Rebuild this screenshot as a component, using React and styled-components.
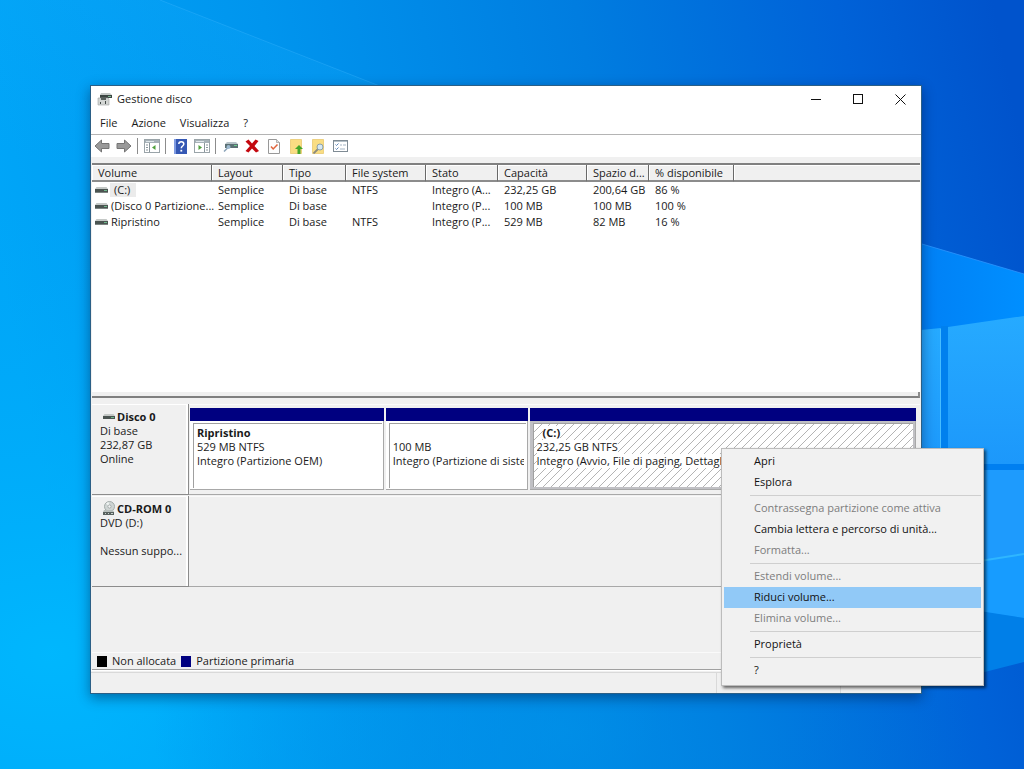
import React, { useState } from 'react';
import styled, { createGlobalStyle } from 'styled-components';

const GlobalStyle = createGlobalStyle`
  * {
    box-sizing: border-box;
  }

  body {
    margin: 0;
    background: #0086e0;
    color: #1a1a1a;
    font-family: 'Open Sans', 'Segoe UI', sans-serif;
    font-size: 11px;
    line-height: 14px;
  }

  button {
    font: inherit;
    color: inherit;
    background: none;
    border: none;
    padding: 0;
  }
`;

// Desktop
const Desktop = styled.div`
  position: relative;
  min-height: 100vh;
  overflow: hidden;
`;

const WallpaperSvg = styled.svg`
  position: absolute;
  inset: 0;
  width: 100%;
  height: 100%;
`;

// Window
const Window = styled.main`
  position: absolute;
  top: 85px;
  left: 90px;
  right: 102px;
  background: #f0f0f0;
  border: 1px solid #2b5f86;
  box-shadow: 0 4px 12px rgba(0, 20, 60, 0.45);
`;

const TitleBar = styled.header`
  display: flex;
  align-items: center;
  height: 26px;
  padding-left: 6px;
  background: #fff;
`;

const Title = styled.h1`
  flex: 1;
  margin: 0 0 0 5px;
  font-size: 11px;
  font-weight: 400;
`;

const CaptionButton = styled.button`
  display: flex;
  align-items: center;
  justify-content: center;
  width: 42px;
  height: 26px;

  &:hover {
    background: #e5e5e5;
  }
`;

const MenuBar = styled.nav`
  display: flex;
  height: 22px;
  padding-left: 2px;
  background: #fff;
`;

const MenuBarButton = styled.button`
  padding: 0 7px;

  &:hover {
    background: #e5f3ff;
  }
`;

const Toolbar = styled.div`
  display: flex;
  align-items: center;
  height: 23px;
  background: #fff;
  border-top: 1px solid #b4b4b4;
`;

const ToolButton = styled.button`
  display: flex;
  align-items: center;
  justify-content: center;
  width: 22px;
  height: 20px;
`;

const ToolSeparator = styled.span`
  width: 1px;
  height: 16px;
  margin: 0 3px 0 2px;
  background: #8c8c8c;
`;

// Volume list
const ListPane = styled.section`
  min-height: 229px;
  margin: 6px 1px 0;
  background: #fff;
  border-top: 2px solid #808080;
`;

const VolumeTable = styled.table`
  width: 100%;
  table-layout: fixed;
  border-collapse: separate;
  border-spacing: 0;
`;

const Col = styled.col`
  width: ${({ $width }) => ($width ? `${$width}px` : 'auto')};
`;

const HeadCell = styled.th`
  height: 17px;
  padding: 0 0 0 6px;
  overflow: hidden;
  text-align: left;
  text-overflow: ellipsis;
  white-space: nowrap;
  font-weight: 400;
  background: #f0f0f0;
  border-bottom: 2px solid #8c8c8c;
  border-right: ${({ $last }) => ($last ? 'none' : '1px solid #696969')};
  box-shadow: inset 1px 1px 0 #fff;
`;

const Cell = styled.td`
  height: 16px;
  padding: 0 0 0 6px;
  overflow: hidden;
  text-overflow: ellipsis;
  white-space: nowrap;
`;

const NameCell = styled(Cell)`
  padding-left: 3px;
  overflow: visible;

  svg {
    display: inline-block;
    margin: 4px 0;
    vertical-align: top;
  }
`;

const VolumeName = styled.span`
  display: inline-block;
  padding: 0 ${({ $selected }) => ($selected ? '6px 0 4px' : '0 0 1px')};
  margin-left: 2px;
  vertical-align: top;
  background: ${({ $selected }) => ($selected ? '#ebebeb' : 'none')};
`;

const Splitter = styled.div`
  height: 6px;
  margin: 0 1px;
  border-right: 2px solid #8c8c8c;
  border-bottom: 2px solid #808080;
`;

// Disk map
const DiskPane = styled.section`
  display: flex;
  flex-direction: column;
  gap: 1px;
  min-height: 254px;
  margin-left: 1px;
  padding-top: 6px;
`;

const DiskRow = styled.div`
  display: flex;
  height: 91px;
`;

const DiskLabel = styled.div`
  width: 97px;
  padding: 6px 4px 0 8px;
  border-right: 1px solid #8c8c8c;
  border-bottom: 1px solid #8c8c8c;
  box-shadow: inset -2px 1px 0 #fff;
`;

const DiskName = styled.h2`
  display: flex;
  align-items: flex-end;
  gap: 1px;
  height: 14px;
  margin: 0;
  font-size: 11px;
  line-height: 14px;
  font-weight: 700;
  white-space: nowrap;
`;

const DiskLine = styled.div`
  height: 14px;
  overflow: hidden;
  text-overflow: ellipsis;
  white-space: nowrap;
`;

const Lane = styled.div`
  display: flex;
  flex: 1;
  gap: 2px;
  min-width: 0;
  margin-right: 1px;
  padding: 4px 4px 4px 1px;
  border-bottom: 1px solid #a8a8a8;
  box-shadow: inset 0 1px 0 #fafafa;
`;

const Partition = styled.div`
  display: flex;
  flex-direction: column;
  flex: ${({ $share }) => $share} 1 0;
  min-width: 0;
  border-top: 13px solid #000080;
`;

const PartitionFrame = styled.div`
  display: flex;
  flex: 1;
  padding: ${({ $selected }) => ($selected ? '2px 2px 2px 3px' : '2px 1px 1px 3px')};
  background: ${({ $selected }) => ($selected ? '#c0c0c4' : '#fff')};
  border: solid #a8a8a8;
  border-width: 0 1px 1px 0;
`;

const PartitionBody = styled.div`
  flex: 1;
  min-width: 0;
  padding: 2px 2px 0 3px;
  overflow: hidden;
  border: solid #a0a0a0;
  border-width: 1px 0 0 1px;
  background: ${({ $selected }) =>
    $selected
      ? 'linear-gradient(135deg, #fff 46%, #b4b4b4 46% 54%, #fff 54%) 0 0 / 8px 8px'
      : '#fff'};
`;

const PartitionLine = styled.div`
  height: 14px;
  overflow: hidden;
  white-space: nowrap;
  font-weight: ${({ $bold }) => ($bold ? 700 : 400)};
  padding-left: ${({ $indent }) => ($indent ? '6px' : '0')};

  span {
    display: inline-block;
    background: #fff;
  }
`;

const Legend = styled.div`
  display: flex;
  align-items: center;
  gap: 5px;
  height: 18px;
  margin: 0 1px;
  padding-left: 5px;
  border-top: 1px solid #fafafa;
  border-bottom: 1px solid #a0a0a0;
`;

const Swatch = styled.span`
  width: 10px;
  height: 11px;
  background: ${({ $color }) => $color};
`;

const StatusBar = styled.footer`
  display: flex;
  height: 23px;
  border-top: 1px solid #fff;
`;

const StatusCell = styled.div`
  flex: ${({ $width }) => ($width ? `0 0 ${$width}px` : '1')};
  margin-top: 1px;
  border-top: 1px solid #d9d9d9;
  border-right: 1px solid #d9d9d9;

  &:last-child {
    border-right: none;
  }
`;

// Context menu
const ContextMenu = styled.div`
  position: absolute;
  top: 448px;
  right: 40px;
  width: 263px;
  padding: 2px 2px 4px 2px;
  background: #f1f1f1;
  border: 1px solid #bcbcbc;
  box-shadow: 2px 2px 3px rgba(0, 0, 0, 0.6);
`;

const ContextItem = styled.button`
  display: block;
  width: 100%;
  height: 21px;
  padding: 0 0 1px 30px;
  text-align: left;
  white-space: nowrap;
  color: ${({ disabled }) => (disabled ? '#7d7d7d' : '#111')};
  background: ${({ $active }) => ($active ? '#91c9f7' : 'none')};
`;

const ContextSeparator = styled.hr`
  height: 1px;
  margin: 2px 0 2px 26px;
  border: none;
  background: #cfcfcf;
`;

const columns = [
  { label: 'Volume', width: 120 },
  { label: 'Layout', width: 71 },
  { label: 'Tipo', width: 63 },
  { label: 'File system', width: 80 },
  { label: 'Stato', width: 72 },
  { label: 'Capacità', width: 89 },
  { label: 'Spazio d...', width: 62 },
  { label: '% disponibile', width: 85 },
];

const volumes = [
  { name: '(C:)', cells: ['Semplice', 'Di base', 'NTFS', 'Integro (A...', '232,25 GB', '200,64 GB', '86 %'] },
  { name: '(Disco 0 Partizione...', cells: ['Semplice', 'Di base', '', 'Integro (P...', '100 MB', '100 MB', '100 %'] },
  { name: 'Ripristino', cells: ['Semplice', 'Di base', 'NTFS', 'Integro (P...', '529 MB', '82 MB', '16 %'] },
];

const partitions = [
  { id: 'oem', share: 194, name: 'Ripristino', size: '529 MB NTFS', status: 'Integro (Partizione OEM)' },
  { id: 'efi', share: 142, name: '', size: '100 MB', status: 'Integro (Partizione di sistem' },
  {
    id: 'c',
    share: 387,
    name: '(C:)',
    size: '232,25 GB NTFS',
    status: 'Integro (Avvio, File di paging, Dettagli',
    selected: true,
  },
];

const menuItems = [
  { label: 'Apri' },
  { label: 'Esplora' },
  null,
  { label: 'Contrassegna partizione come attiva', disabled: true },
  { label: 'Cambia lettera e percorso di unità...' },
  { label: 'Formatta...', disabled: true },
  null,
  { label: 'Estendi volume...', disabled: true },
  { label: 'Riduci volume...' },
  { label: 'Elimina volume...', disabled: true },
  null,
  { label: 'Proprietà' },
  null,
  { label: '?' },
];

const Wallpaper = () => (
  <WallpaperSvg viewBox="0 0 1024 769" preserveAspectRatio="none" aria-hidden="true">
    <defs>
      <linearGradient id="sky" x1="0" y1="0.35" x2="1" y2="0.2">
        <stop offset="0" stopColor="#00a6f8" />
        <stop offset="0.3" stopColor="#0095ee" />
        <stop offset="0.6" stopColor="#007de0" />
        <stop offset="0.85" stopColor="#0062d8" />
        <stop offset="1" stopColor="#0053cc" />
      </linearGradient>
      <radialGradient id="corner" cx="0.05" cy="0.85" r="0.6">
        <stop offset="0" stopColor="#00bbff" stopOpacity="0.8" />
        <stop offset="1" stopColor="#00a8f8" stopOpacity="0" />
      </radialGradient>
      <radialGradient id="floor" cx="0.55" cy="0.95" r="0.4">
        <stop offset="0" stopColor="#008fe6" stopOpacity="0.7" />
        <stop offset="1" stopColor="#0078dc" stopOpacity="0" />
      </radialGradient>
      <linearGradient id="haze" x1="0" y1="1" x2="0.5" y2="0">
        <stop offset="0.3" stopColor="#18b0ff" stopOpacity="0" />
        <stop offset="1" stopColor="#18b0ff" stopOpacity="0.2" />
      </linearGradient>
      <linearGradient id="beam" x1="0" y1="0" x2="1" y2="0">
        <stop offset="0" stopColor="#0078f0" />
        <stop offset="1" stopColor="#008fff" />
      </linearGradient>
      <linearGradient id="pane" x1="0" y1="0" x2="0" y2="1">
        <stop offset="0" stopColor="#26aaff" />
        <stop offset="1" stopColor="#1c98fb" />
      </linearGradient>
    </defs>
    <rect width="1024" height="769" fill="url(#sky)" />
    <rect width="1024" height="769" fill="url(#corner)" />
    <rect width="1024" height="769" fill="url(#floor)" />
    <polygon points="160,0 390,90 390,240 0,240 0,0" fill="url(#haze)" />
    <path d="M160 0 390 90" stroke="#3cb6ff" opacity="0.35" />
    <polygon points="860,225 922,244 1024,274 1024,620 860,620" fill="url(#beam)" />
    <path d="M922 244 1024 274" stroke="#2d96ff" opacity="0.8" />
    <polygon points="860,336 941,328 941,464 860,464" fill="url(#pane)" />
    <polygon points="948,327 1024,316 1024,464 948,464" fill="url(#pane)" />
    <polygon points="860,470 1024,470 1024,618 860,590" fill="#1e9bfd" />
    <rect x="941" y="326" width="7" height="140" fill="#0080ee" />
    <rect x="941" y="464" width="83" height="6" fill="#007ff0" />
    <path d="M940.500 329V464" stroke="#45bcff" />
    <polygon points="980,561 1024,554 1024,618 980,612" fill="#179cff" />
    <path d="M980 561 1024 554" stroke="#2fb6ff" strokeWidth="2" />
    <polygon points="922,602 1024,618 1024,662 922,688" fill="#007fe8" />
  </WallpaperSvg>
);

const DriveIcon = () => (
  <svg width="13" height="6" viewBox="0 0 13 6" aria-hidden="true">
    <path d="M1.500 0h10l1.500 2H0z" fill="#c4c8c6" />
    <rect y="2" width="13" height="4" fill="#4b5451" />
    <rect y="5" width="13" height="1" fill="#7d8582" />
    <rect x="9" y="3" width="3" height="1" fill="#6fb88c" />
  </svg>
);

const DiskIcon = () => (
  <svg width="16" height="14" viewBox="-3 -4 16 14" aria-hidden="true">
    <path d="M1.500 0h9l1.500 2H0z" fill="#c4c8c6" />
    <rect y="2" width="12" height="3" fill="#4b5451" />
    <rect x="8" y="3" width="3" height="1" fill="#6fb88c" />
  </svg>
);

const CdIcon = () => (
  <svg width="16" height="15" viewBox="-1 0 16 15" aria-hidden="true">
    <circle cx="8.500" cy="5.500" r="5" fill="#cfd5d4" stroke="#a3acaa" />
    <path d="M8.500 5.500 5 2.500 7.500 1z" fill="#f2f6f5" />
    <circle cx="8.500" cy="5.500" r="1.600" fill="#f4f4f4" stroke="#98a19f" strokeWidth="0.8" />
    <path d="M3 9h9l1 2H2z" fill="#b8bfbc" />
    <rect x="2" y="11" width="11" height="3" fill="#58615e" />
    <path d="M4 12.500h1M7 12.500h1M10 12.500h2" stroke="#c8d0cc" />
  </svg>
);

const AppIcon = () => (
  <svg width="15" height="14" viewBox="0 0 15 14" aria-hidden="true">
    <path d="M4 1h9l2 2H3z" fill="#c5c9c7" />
    <rect x="3" y="3" width="12" height="3" fill="#3c4542" />
    <rect x="11" y="4" width="3" height="1" fill="#7fb894" />
    <path d="M1 6h10l1 1v6H1z" fill="#d3d6d4" stroke="#9ea3a1" strokeWidth="0.6" />
    <path d="M4 6h5v2H4z" fill="#58605d" />
    <path d="M3 10h1v2H3zM8 9h1v3H8z" fill="#424947" />
  </svg>
);

const ArrowIcon = ({ forward }) => (
  <svg width="16" height="14" viewBox="0 0 16 14" aria-hidden="true">
    <path
      d={forward ? 'M15 7 8.500 1v3.500H1v5h7.500V13z' : 'M1 7l6.500-6v3.500H15v5H7.500V13z'}
      fill="#9a9a9a"
      stroke="#757575"
    />
  </svg>
);

const PanelIcon = ({ flip }) => (
  <svg width="16" height="14" viewBox="0 0 16 14" aria-hidden="true">
    <rect x="0.500" y="0.500" width="15" height="13" fill="#fff" stroke="#9aa4a9" />
    <rect x="1" y="1" width="14" height="3" fill="#a7b2b8" />
    <path d="M2 2.500h8" stroke="#dfe6ea" />
    {flip ? (
      <>
        <path d="M10.500 4v9M12 6h2M12 8.500h2M12 11h2" stroke="#89959b" />
        <path d="M4.500 6 8 8.500 4.500 11z" fill="#4fa03c" />
      </>
    ) : (
      <>
        <path d="M5.500 4v9M2 6h2M2 8.500h2M2 11h2" stroke="#89959b" />
        <path d="M11.500 6 8 8.500l3.500 2.500z" fill="#4fa03c" />
      </>
    )}
  </svg>
);

const HelpIcon = () => (
  <svg width="13" height="15" viewBox="0 0 13 15" aria-hidden="true">
    <rect width="13" height="15" fill="#3558b4" />
    <rect width="2" height="15" fill="#7f9be0" />
    <path d="M4.800 5c0-3 5-3 5 0 0 2-2.500 2-2.500 4.200" fill="none" stroke="#fff" strokeWidth="1.500" />
    <rect x="6.400" y="10.800" width="1.800" height="1.800" fill="#fff" />
  </svg>
);

const ConnectIcon = () => (
  <svg width="15" height="12" viewBox="0 0 15 12" aria-hidden="true">
    <path d="M4 2h9l2 2H2z" fill="#b7c3c8" />
    <rect x="2" y="4" width="13" height="4" fill="#5b7074" />
    <rect x="11" y="5" width="3" height="1" fill="#6bd08c" />
    <path d="M1 11.500l4-4" stroke="#8aa3b8" strokeWidth="1.500" />
    <circle cx="5.500" cy="7" r="2" fill="#9dbad0" />
  </svg>
);

const DeleteIcon = () => (
  <svg width="14" height="14" viewBox="0 0 14 14" aria-hidden="true">
    <path d="M0.500 2.500 3.500.5 7 4.500 10.500.5 13.500 2 9.500 7l4.500 5-3 1.500L7 9.500 3.500 13.500.5 12 5 7z" fill="#c4080f" />
  </svg>
);

const CheckPageIcon = () => (
  <svg width="12" height="15" viewBox="0 0 12 15" aria-hidden="true">
    <path d="M.5.5h8l3 3v11H.5z" fill="#fdfdfd" stroke="#989898" />
    <path d="M8.500.5v3h3" fill="#ddd" stroke="#989898" strokeWidth="0.700" />
    <path d="M3 7.500 5.200 10 9.500 5.500" fill="none" stroke="#e0643c" strokeWidth="1.500" />
  </svg>
);

const FolderUpIcon = () => (
  <svg width="13" height="15" viewBox="0 0 13 15" aria-hidden="true">
    <path d="M.5.5h11v14H.5z" fill="#f9dd83" stroke="#e3bd55" strokeWidth="0.600" />
    <path d="M9 6l4 4h-2.500v5h-3v-5H5z" fill="#43a62a" />
  </svg>
);

const FolderSearchIcon = () => (
  <svg width="14" height="15" viewBox="0 0 14 15" aria-hidden="true">
    <path d="M1.500.5h11v14h-11z" fill="#f9dd83" stroke="#e3bd55" strokeWidth="0.600" />
    <path d="M7 10 2.500 14.500" stroke="#8b8b7c" strokeWidth="1.800" />
    <circle cx="9" cy="8" r="3" fill="#d5e8f2" stroke="#8ba0aa" />
  </svg>
);

const ListIcon = () => (
  <svg width="15" height="12" viewBox="0 0 15 12" aria-hidden="true">
    <rect x="0.500" y="0.500" width="14" height="11" fill="#fff" stroke="#7f8b94" />
    <path d="M1 1.500h13" stroke="#b4c0c8" />
    <path d="M2.500 4.500l1 1 2-2M2.500 8.500l1 1 2-2" fill="none" stroke="#5b84b8" />
    <path d="M7 5h2M10 5h3M7 9h5" stroke="#a4b4c4" />
  </svg>
);

const toolGroups = [
  [
    { label: 'Indietro', icon: <ArrowIcon /> },
    { label: 'Avanti', icon: <ArrowIcon forward /> },
  ],
  [{ label: 'Mostra albero', icon: <PanelIcon /> }],
  [
    { label: 'Guida', icon: <HelpIcon /> },
    { label: 'Mostra azioni', icon: <PanelIcon flip /> },
  ],
  [
    { label: 'Connetti', icon: <ConnectIcon /> },
    { label: 'Elimina', icon: <DeleteIcon /> },
    { label: 'Verifica', icon: <CheckPageIcon /> },
    { label: 'Livello superiore', icon: <FolderUpIcon /> },
    { label: 'Cerca', icon: <FolderSearchIcon /> },
    { label: 'Impostazioni', icon: <ListIcon /> },
  ],
];

const App = () => {
  const [activeItem, setActiveItem] = useState('Riduci volume...');

  return (
    <Desktop>
      <GlobalStyle />
      <Wallpaper />

      <Window>
        <TitleBar>
          <AppIcon />
          <Title>Gestione disco</Title>
          <CaptionButton aria-label="Riduci a icona">
            <svg width="11" height="11" viewBox="0 0 11 11">
              <path d="M0 5.500h10" stroke="#111" />
            </svg>
          </CaptionButton>
          <CaptionButton aria-label="Ingrandisci">
            <svg width="11" height="11" viewBox="0 0 11 11">
              <rect x="0.500" y="0.500" width="9" height="9" fill="none" stroke="#111" />
            </svg>
          </CaptionButton>
          <CaptionButton aria-label="Chiudi">
            <svg width="11" height="11" viewBox="0 0 11 11">
              <path d="M.5.5l10 10M10.500.5l-10 10" stroke="#111" />
            </svg>
          </CaptionButton>
        </TitleBar>

        <MenuBar>
          {['File', 'Azione', 'Visualizza', '?'].map((label) => (
            <MenuBarButton key={label}>{label}</MenuBarButton>
          ))}
        </MenuBar>

        <Toolbar>
          {toolGroups.map((group, index) => (
            <React.Fragment key={group[0].label}>
              {index > 0 && <ToolSeparator />}
              {group.map(({ label, icon }) => (
                <ToolButton key={label} aria-label={label}>
                  {icon}
                </ToolButton>
              ))}
            </React.Fragment>
          ))}
        </Toolbar>

        <ListPane>
          <VolumeTable>
            <colgroup>
              {columns.map(({ label, width }) => (
                <Col key={label} $width={width} />
              ))}
              <Col />
            </colgroup>
            <thead>
              <tr>
                {columns.map(({ label }) => (
                  <HeadCell key={label}>{label}</HeadCell>
                ))}
                <HeadCell $last />
              </tr>
            </thead>
            <tbody>
              {volumes.map(({ name, cells }, row) => (
                <tr key={name}>
                  <NameCell>
                    <DriveIcon />
                    <VolumeName $selected={row === 0}>{name}</VolumeName>
                  </NameCell>
                  {cells.map((text, index) => (
                    <Cell key={columns[index + 1].label}>{text}</Cell>
                  ))}
                  <Cell />
                </tr>
              ))}
            </tbody>
          </VolumeTable>
        </ListPane>
        <Splitter />

        <DiskPane>
          <DiskRow>
            <DiskLabel>
              <DiskName>
                <DiskIcon />
                Disco 0
              </DiskName>
              <DiskLine>Di base</DiskLine>
              <DiskLine>232,87 GB</DiskLine>
              <DiskLine>Online</DiskLine>
            </DiskLabel>
            <Lane>
              {partitions.map(({ id, share, name, size, status, selected }) => (
                <Partition key={id} $share={share}>
                  <PartitionFrame $selected={selected}>
                    <PartitionBody $selected={selected}>
                      <PartitionLine $bold $indent={selected}>
                        <span>{name}</span>
                      </PartitionLine>
                      <PartitionLine>
                        <span>{size}</span>
                      </PartitionLine>
                      <PartitionLine>
                        <span>{status}</span>
                      </PartitionLine>
                    </PartitionBody>
                  </PartitionFrame>
                </Partition>
              ))}
            </Lane>
          </DiskRow>

          <DiskRow>
            <DiskLabel>
              <DiskName>
                <CdIcon />
                CD-ROM 0
              </DiskName>
              <DiskLine>DVD (D:)</DiskLine>
              <DiskLine />
              <DiskLine>Nessun suppo...</DiskLine>
            </DiskLabel>
            <Lane />
          </DiskRow>
        </DiskPane>

        <Legend>
          <Swatch $color="#000" />
          <span>Non allocata</span>
          <Swatch $color="#000080" />
          <span>Partizione primaria</span>
        </Legend>

        <StatusBar>
          <StatusCell />
          <StatusCell $width={124} />
          <StatusCell $width={80} />
        </StatusBar>
      </Window>

      <ContextMenu role="menu">
        {menuItems.map((item, index) =>
          item ? (
            <ContextItem
              key={item.label}
              role="menuitem"
              disabled={item.disabled}
              $active={item.label === activeItem}
              onMouseEnter={() => setActiveItem(item.label)}
            >
              {item.label}
            </ContextItem>
          ) : (
            <ContextSeparator key={`separator-${index}`} />
          )
        )}
      </ContextMenu>
    </Desktop>
  );
};

export default App;
